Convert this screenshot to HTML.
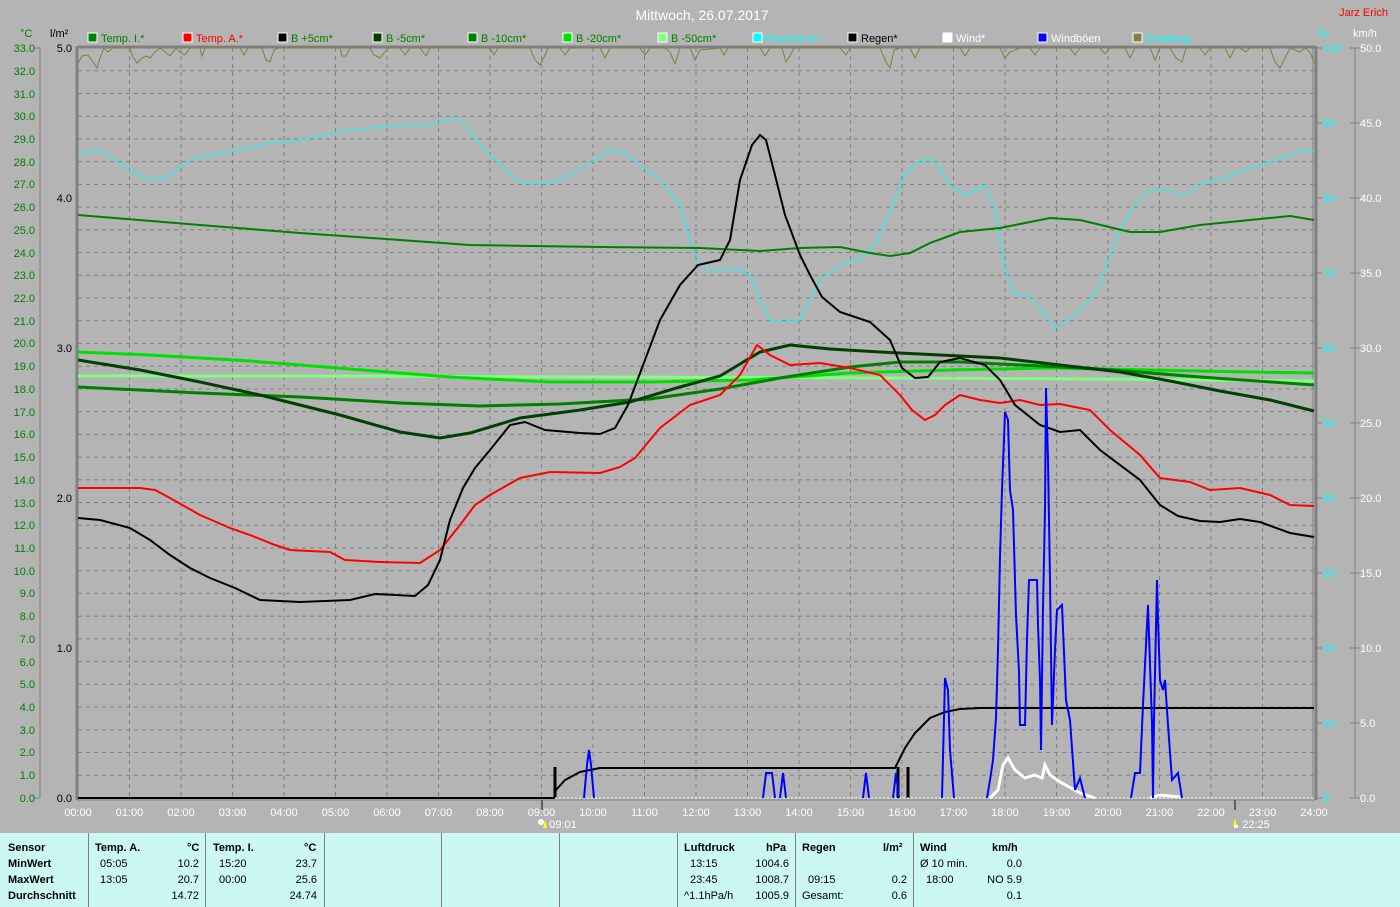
<!DOCTYPE html>
<html><head><meta charset="utf-8"><style>
html,body{margin:0;padding:0;background:#b4b4b4;}
body{width:1400px;height:907px;overflow:hidden;position:relative;font-family:"Liberation Sans",sans-serif;}
svg{position:absolute;left:0;top:0;}
.tbl{position:absolute;left:0;top:833px;width:1400px;height:74px;background:#ccf8f4;font-size:11px;color:#000;}
.tbl div{position:absolute;white-space:nowrap;}
.b{font-weight:bold;}
.sep{position:absolute;top:0;width:1px;height:74px;background:#808080;}
</style></head><body>
<svg width="1400" height="833" viewBox="0 0 1400 833" font-family="Liberation Sans, sans-serif">
<rect width="1400" height="833" fill="#b4b4b4"/>
<text x="702" y="20" fill="#fff" font-size="14" text-anchor="middle">Mittwoch, 26.07.2017</text>
<text x="1388" y="16" fill="#f00" font-size="11" text-anchor="end">Jarz Erich</text>
<g font-size="11">
<rect x="88" y="33" width="9" height="9" fill="#008000" stroke="#fff"/><text x="101" y="42" fill="#008000">Temp. I.*</text>
<rect x="183" y="33" width="9" height="9" fill="#f00" stroke="#fff"/><text x="196" y="42" fill="#f00">Temp. A.*</text>
<rect x="278" y="33" width="9" height="9" fill="#000" stroke="#fff"/><text x="291" y="42" fill="#008000">B +5cm*</text>
<rect x="373" y="33" width="9" height="9" fill="#004000" stroke="#fff"/><text x="386" y="42" fill="#008000">B -5cm*</text>
<rect x="468" y="33" width="9" height="9" fill="#008000" stroke="#fff"/><text x="481" y="42" fill="#008000">B -10cm*</text>
<rect x="563" y="33" width="9" height="9" fill="#00e000" stroke="#fff"/><text x="576" y="42" fill="#008000">B -20cm*</text>
<rect x="658" y="33" width="9" height="9" fill="#80ff80" stroke="#fff"/><text x="671" y="42" fill="#008000">B -50cm*</text>
<rect x="753" y="33" width="9" height="9" fill="#0ff" stroke="#fff"/><text x="766" y="42" fill="#0ff">Feuchte A.*</text>
<rect x="848" y="33" width="9" height="9" fill="#000" stroke="#fff"/><text x="861" y="42" fill="#000">Regen*</text>
<rect x="943" y="33" width="9" height="9" fill="#fff" stroke="#fff"/><text x="956" y="42" fill="#fff">Wind*</text>
<rect x="1038" y="33" width="9" height="9" fill="#00f" stroke="#fff"/><text x="1051" y="42" fill="#fff">Windböen</text>
<rect x="1133" y="33" width="9" height="9" fill="#808040" stroke="#fff"/><text x="1146" y="42" fill="#0ff">Empfang</text>
<text x="20" y="37" fill="#008000">°C</text>
<text x="50" y="37" fill="#000">l/m²</text>
<text x="1318" y="37" fill="#0ff">%</text>
<text x="1353" y="37" fill="#fff">km/h</text>
</g>
<g stroke="#808080" stroke-dasharray="4,4" stroke-width="1">
<path d="M78 70.7H1314M78 93.5H1314M78 116.2H1314M78 138.9H1314M78 161.6H1314M78 184.4H1314M78 207.1H1314M78 229.8H1314M78 252.5H1314M78 275.3H1314M78 298H1314M78 320.7H1314M78 343.4H1314M78 366.2H1314M78 388.9H1314M78 411.6H1314M78 434.4H1314M78 457.1H1314M78 479.8H1314M78 502.5H1314M78 525.3H1314M78 548H1314M78 570.7H1314M78 593.4H1314M78 616.2H1314M78 638.9H1314M78 661.6H1314M78 684.3H1314M78 707.1H1314M78 729.8H1314M78 752.5H1314M78 775.2H1314"/>
<path d="M129.5 48V798M181 48V798M232.5 48V798M284 48V798M335.5 48V798M387 48V798M438.5 48V798M490 48V798M541.5 48V798M593 48V798M644.5 48V798M696 48V798M747.5 48V798M799 48V798M850.5 48V798M902 48V798M953.5 48V798M1005 48V798M1056.5 48V798M1108 48V798M1159.5 48V798M1211 48V798M1262.5 48V798"/>
</g>
<g stroke="#808080" stroke-width="3" fill="none">
<path d="M78 47H1315"/><path d="M77 46V800"/><path d="M1316 46V800"/>
</g>
<g stroke="#808080" stroke-width="1">
<path d="M1313 48V798M40 48V798M1355 48V798M78 800H1314"/>
<path d="M34 48H40M34 798H40M1350 48H1360M1350 123H1360M1350 198H1360M1350 273H1360M1350 348H1360M1350 423H1360M1350 498H1360M1350 573H1360M1350 648H1360M1350 723H1360M1350 798H1360M1316 48H1322M1316 123H1322M1316 198H1322M1316 273H1322M1316 348H1322M1316 423H1322M1316 498H1322M1316 573H1322M1316 648H1322M1316 723H1322M1316 798H1322"/>
</g>
<g font-size="11" fill="#008000" text-anchor="end">
<text x="35" y="52">33.0</text><text x="35" y="75">32.0</text><text x="35" y="98">31.0</text><text x="35" y="120">30.0</text><text x="35" y="143">29.0</text><text x="35" y="166">28.0</text><text x="35" y="188">27.0</text><text x="35" y="211">26.0</text><text x="35" y="234">25.0</text><text x="35" y="257">24.0</text><text x="35" y="279">23.0</text><text x="35" y="302">22.0</text><text x="35" y="325">21.0</text><text x="35" y="347">20.0</text><text x="35" y="370">19.0</text><text x="35" y="393">18.0</text><text x="35" y="416">17.0</text><text x="35" y="438">16.0</text><text x="35" y="461">15.0</text><text x="35" y="484">14.0</text><text x="35" y="507">13.0</text><text x="35" y="529">12.0</text><text x="35" y="552">11.0</text><text x="35" y="575">10.0</text><text x="35" y="597">9.0</text><text x="35" y="620">8.0</text><text x="35" y="643">7.0</text><text x="35" y="666">6.0</text><text x="35" y="688">5.0</text><text x="35" y="711">4.0</text><text x="35" y="734">3.0</text><text x="35" y="756">2.0</text><text x="35" y="779">1.0</text><text x="35" y="802">0.0</text>
</g>
<g font-size="11" fill="#000" text-anchor="end">
<text x="72" y="52">5.0</text><text x="72" y="202">4.0</text><text x="72" y="352">3.0</text><text x="72" y="502">2.0</text><text x="72" y="652">1.0</text><text x="72" y="802">0.0</text>
</g>
<g font-size="11" fill="#0ff">
<text x="1323" y="52">100</text><text x="1323" y="127">90</text><text x="1323" y="202">80</text><text x="1323" y="277">70</text><text x="1323" y="352">60</text><text x="1323" y="427">50</text><text x="1323" y="502">40</text><text x="1323" y="577">30</text><text x="1323" y="652">20</text><text x="1323" y="727">10</text><text x="1323" y="802">0</text>
</g>
<g font-size="11" fill="#fff">
<text x="1360" y="52">50.0</text><text x="1360" y="127">45.0</text><text x="1360" y="202">40.0</text><text x="1360" y="277">35.0</text><text x="1360" y="352">30.0</text><text x="1360" y="427">25.0</text><text x="1360" y="502">20.0</text><text x="1360" y="577">15.0</text><text x="1360" y="652">10.0</text><text x="1360" y="727">5.0</text><text x="1360" y="802">0.0</text>
</g>
<g font-size="11" fill="#fff" text-anchor="middle">
<text x="78" y="816">00:00</text><text x="129.5" y="816">01:00</text><text x="181" y="816">02:00</text><text x="232.5" y="816">03:00</text><text x="284" y="816">04:00</text><text x="335.5" y="816">05:00</text><text x="387" y="816">06:00</text><text x="438.5" y="816">07:00</text><text x="490" y="816">08:00</text><text x="541.5" y="816">09:00</text><text x="593" y="816">10:00</text><text x="644.5" y="816">11:00</text><text x="696" y="816">12:00</text><text x="747.5" y="816">13:00</text><text x="799" y="816">14:00</text><text x="850.5" y="816">15:00</text><text x="902" y="816">16:00</text><text x="953.5" y="816">17:00</text><text x="1005" y="816">18:00</text><text x="1056.5" y="816">19:00</text><text x="1108" y="816">20:00</text><text x="1159.5" y="816">21:00</text><text x="1211" y="816">22:00</text><text x="1262.5" y="816">23:00</text><text x="1314" y="816">24:00</text>
<text x="563" y="828">09:01</text><text x="1256" y="828">22:25</text>
</g>
<path d="M542 800V810M1235 800V810" stroke="#606060" stroke-width="2"/>
<circle cx="541" cy="822" r="3" fill="#fff"/><path d="M545 820l-2 8h4z" fill="#ff0"/>
<path d="M1235 818l-2 8h4z" fill="#ff0"/><rect x="1234" y="825" width="4" height="3" fill="#fff"/>
<polyline fill="none" stroke="#808040" stroke-width="1" points="78,63 82,56 88,55 93,62 97,68 100,58 104,48 108,52 113,48 118,48 130,48 132,55 137,63 142,58 146,56 150,58 155,52 160,48 165,52 170,56 176,48 180,52 185,55 190,48 200,48 202,56 205,48 240,48 244,55 248,48 262,48 266,60 270,62 274,50 278,48 340,48 342,56 346,56 350,48 370,48 374,55 380,58 385,52 388,48 400,48 405,55 410,48 420,48 426,56 430,48 460,48 490,48 494,55 498,48 530,48 535,60 540,65 545,55 548,48 560,48 565,55 570,48 600,48 605,58 610,48 640,48 645,55 650,48 665,48 670,52 675,64 680,48 690,48 695,60 700,50 720,48 724,55 728,48 760,48 765,56 770,48 782,48 786,62 790,56 794,48 840,48 846,55 850,48 880,48 886,62 890,68 894,50 900,48 910,48 915,58 920,48 960,48 965,56 970,48 1000,48 1005,58 1010,52 1020,48 1030,48 1035,55 1040,48 1070,48 1075,55 1080,48 1100,48 1105,54 1110,48 1125,48 1130,58 1135,48 1150,48 1155,60 1160,48 1170,48 1176,58 1182,62 1186,48 1200,48 1205,55 1210,48 1225,48 1230,58 1235,48 1240,48 1246,52 1250,48 1270,48 1275,62 1280,68 1286,56 1290,48 1300,52 1305,48 1310,52 1314,62"/>
<polyline fill="none" stroke="#0ff" stroke-width="1" points="78,153 90,152 100,150 115,160 130,170 145,178 160,180 175,172 190,160 210,155 240,150 270,143 300,140 330,134 350,130 380,127 400,125 430,125 445,120 455,118 465,125 480,145 500,165 520,183 540,184 560,180 590,163 610,150 625,153 640,165 660,180 680,205 690,240 700,265 715,272 735,268 750,275 760,300 770,320 785,322 800,320 810,300 820,280 840,265 860,258 875,245 890,210 905,175 920,160 935,160 950,185 965,195 985,185 995,210 1005,270 1015,295 1030,295 1045,315 1055,328 1070,318 1085,305 1100,285 1110,255 1120,230 1135,205 1150,190 1165,190 1185,195 1205,182 1225,178 1250,168 1270,162 1290,155 1305,150 1314,152"/>
<polyline fill="none" stroke="#80ff80" stroke-width="3" points="78,376 300,376 600,377 900,378 1100,379 1314,381"/>
<polyline fill="none" stroke="#00e000" stroke-width="3" points="78,352 150,355 250,361 350,369 450,377 550,382 650,382 750,380 850,373 950,370 1050,368 1150,370 1250,372 1314,373"/>
<polyline fill="none" stroke="#008000" stroke-width="3" points="78,387 200,393 300,397 400,403 480,406 560,404 650,399 720,389 780,378 850,367 900,362 960,362 1000,364 1100,369 1200,377 1314,385"/>
<polyline fill="none" stroke="#004000" stroke-width="3" points="78,360 140,370 200,382 260,395 300,405 340,415 400,432 440,438 470,433 520,418 580,410 630,402 680,387 720,376 760,352 790,345 830,349 880,352 940,355 1000,358 1060,365 1120,372 1170,381 1220,391 1270,400 1314,411"/>
<polyline fill="none" stroke="#008000" stroke-width="2" points="78,215 200,225 300,233 400,240 470,245 600,247 700,248 760,251 800,248 840,247 870,253 890,256 910,253 930,243 960,232 1000,228 1050,218 1080,220 1130,232 1160,232 1200,225 1250,220 1290,216 1314,220"/>
<polyline fill="none" stroke="#f00" stroke-width="2" points="78,488 140,488 155,490 170,498 200,515 230,528 250,535 275,545 290,550 330,552 345,560 380,562 420,563 440,550 460,525 475,505 490,495 520,478 550,472 600,473 620,467 635,458 660,428 690,405 720,395 740,375 757,345 770,355 790,365 820,363 850,368 880,375 900,395 912,410 925,420 935,415 945,405 960,395 980,400 1000,403 1020,400 1040,405 1060,404 1090,410 1110,430 1140,455 1160,478 1190,482 1210,490 1240,488 1270,495 1290,505 1314,506"/>
<polyline fill="none" stroke="#000" stroke-width="2" points="78,518 100,520 130,528 150,540 170,555 190,568 210,578 235,588 260,600 300,602 350,600 375,594 415,596 428,585 440,560 450,520 463,488 475,468 490,450 510,425 525,422 545,430 580,433 600,434 615,428 628,405 645,360 660,320 680,285 698,265 720,260 730,240 740,180 752,145 760,135 766,140 775,175 785,215 800,255 810,275 822,297 840,312 870,322 890,340 902,368 915,378 928,377 940,362 960,358 985,365 1000,380 1015,405 1040,425 1060,432 1080,430 1100,450 1140,480 1160,505 1178,516 1200,521 1220,522 1240,519 1260,522 1290,533 1314,537"/>
<polyline fill="none" stroke="#000" stroke-width="2" points="78,798 554,798 556,790 565,780 580,772 600,768 895,768 900,758 905,748 915,733 930,718 945,712 960,709 980,708 1314,708"/>
<path d="M555 767V798M898 767V798M908 767V798" stroke="#000" stroke-width="3"/>
<path d="M555 798H1314" stroke="#fff" stroke-width="1" stroke-dasharray="2,2"/>
<polyline fill="none" stroke="#fff" stroke-width="3" points="990,798 998,790 1003,765 1008,758 1015,770 1025,778 1035,775 1042,778 1045,765 1050,775 1060,782 1080,793 1095,798"/>
<polyline fill="none" stroke="#fff" stroke-width="3" points="1150,798 1160,795 1180,797"/>
<path fill="none" stroke="#00f" stroke-width="2" d="M584 798L587 765L589 750L591 765L594 798 M763 798L766 773L772 773L775 798 M780 798L783 773L786 798 M863 798L866 773L869 798 M893 798L896 773L899 798 M942 798L945 678L948 690L950 750L954 798 M987 798L990 780L993 760L996 718L998 650L1000 557L1002 490L1005 412L1008 420L1010 490L1013 510L1016 615L1019 672L1020 725L1025 725L1027 640L1029 580L1037 580L1038 625L1040 680L1041 750L1043 608L1045 510L1046 388L1048 460L1050 580L1052 725L1055 650L1057 610L1062 605L1066 700L1070 720L1075 790L1080 778L1085 798 M1131 798L1135 773L1140 773L1143 705L1148 605L1152 723L1153 798L1154 720L1157 580L1158 620L1160 680L1163 690L1165 680L1168 725L1172 780L1178 773L1182 798"/>
</svg>
<div class="tbl">
<div class="sep" style="left:88px"></div><div class="sep" style="left:205px"></div><div class="sep" style="left:324px"></div><div class="sep" style="left:441px"></div><div class="sep" style="left:559px"></div><div class="sep" style="left:677px"></div><div class="sep" style="left:795px"></div><div class="sep" style="left:913px"></div>
<div class="b" style="left:8px;top:9px">Sensor</div><div class="b" style="left:8px;top:25px">MinWert</div><div class="b" style="left:8px;top:41px">MaxWert</div><div class="b" style="left:8px;top:57px">Durchschnitt</div>
<div class="b" style="left:95px;top:9px">Temp. A.</div><div class="b" style="left:187px;top:9px">°C</div>
<div style="left:100px;top:25px">05:05</div><div style="right:1201px;top:25px">10.2</div>
<div style="left:100px;top:41px">13:05</div><div style="right:1201px;top:41px">20.7</div>
<div style="right:1201px;top:57px">14.72</div>
<div class="b" style="left:213px;top:9px">Temp. I.</div><div class="b" style="left:304px;top:9px">°C</div>
<div style="left:219px;top:25px">15:20</div><div style="right:1083px;top:25px">23.7</div>
<div style="left:219px;top:41px">00:00</div><div style="right:1083px;top:41px">25.6</div>
<div style="right:1083px;top:57px">24.74</div>
<div class="b" style="left:684px;top:9px">Luftdruck</div><div class="b" style="left:766px;top:9px">hPa</div>
<div style="left:690px;top:25px">13:15</div><div style="right:611px;top:25px">1004.6</div>
<div style="left:690px;top:41px">23:45</div><div style="right:611px;top:41px">1008.7</div>
<div style="left:684px;top:57px">^1.1hPa/h</div><div style="right:611px;top:57px">1005.9</div>
<div class="b" style="left:802px;top:9px">Regen</div><div class="b" style="left:883px;top:9px">l/m²</div>
<div style="left:808px;top:41px">09:15</div><div style="right:493px;top:41px">0.2</div>
<div style="left:802px;top:57px">Gesamt:</div><div style="right:493px;top:57px">0.6</div>
<div class="b" style="left:920px;top:9px">Wind</div><div class="b" style="left:992px;top:9px">km/h</div>
<div style="left:920px;top:25px">Ø 10 min.</div><div style="right:378px;top:25px">0.0</div>
<div style="left:926px;top:41px">18:00</div><div style="right:378px;top:41px">NO 5.9</div>
<div style="right:378px;top:57px">0.1</div>
</div>
</body></html>
